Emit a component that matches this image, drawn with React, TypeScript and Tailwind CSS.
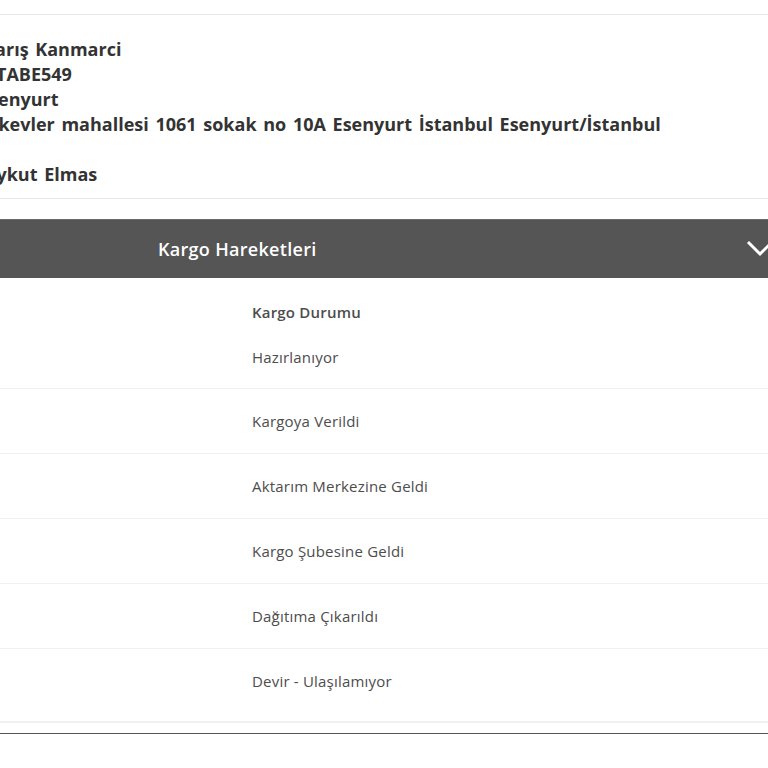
import React from "react";

const rows = [
  "Kargoya Verildi",
  "Aktarım Merkezine Geldi",
  "Kargo Şubesine Geldi",
  "Dağıtıma Çıkarıldı",
];

export default function App() {
  const font = { fontFamily: '"Open Sans", "Noto Sans", "Liberation Sans", sans-serif' };
  return (
    <div className="w-[768px] h-[768px] overflow-hidden bg-white" style={font}>
      <div className="h-[14px]" />
      <div className="border-t border-b border-[#e8e8e8] pt-[22px] pb-[11px] overflow-hidden">
        <div className="flex flex-col text-[18px] leading-[25px] font-bold text-[#333333] tracking-[0px] [word-spacing:2px] whitespace-nowrap">
          <div className="-ml-[17px]">Barış Kanmarci</div>
          <div className="-ml-[4px]">TABE549</div>
          <div className="-ml-[21px]">Esenyurt</div>
          <div className="-ml-[14px]">Akevler mahallesi 1061 sokak no 10A Esenyurt İstanbul Esenyurt/İstanbul</div>
          <div className="h-[25px]" />
          <div className="-ml-[16px]">Aykut Elmas</div>
        </div>
      </div>
      <div className="h-[20px]" />
      <div className="h-[59px] bg-[#555555] border-t border-[#6a6a6a] flex items-center justify-between">
        <div className="pl-[158px] text-white text-[18px] font-semibold tracking-[0.3px]">Kargo Hareketleri</div>
        <svg width="30" height="20" viewBox="0 0 30 20" className="-mr-[8px]">
          <path d="M2 3 L14 15 L26 3" fill="none" stroke="white" strokeWidth="3" />
        </svg>
      </div>
      <div className="grid grid-cols-[252px_1fr] text-[15px] text-[#4d4d4d] tracking-[0.2px]">
        <div className="h-[111px] border-b border-[#f0f0f0]" />
        <div className="h-[111px] border-b border-[#f0f0f0] flex flex-col pt-[23px]">
          <div className="font-semibold leading-[22px]">Kargo Durumu</div>
          <div className="leading-[22px] mt-[23px]">Hazırlanıyor</div>
        </div>
        {rows.map((r) => (
          <React.Fragment key={r}>
            <div className="h-[65px] border-b border-[#f0f0f0]" />
            <div className="h-[65px] border-b border-[#f0f0f0] flex items-center">{r}</div>
          </React.Fragment>
        ))}
        <div className="h-[74px] border-b-2 border-[#f0f0f0]" />
        <div className="h-[74px] border-b-2 border-[#f0f0f0] pt-[21px] leading-[22px]">Devir - Ulaşılamıyor</div>
      </div>
      <div className="h-[10px]" />
      <div className="border-t border-[#555555]" />
    </div>
  );
}
